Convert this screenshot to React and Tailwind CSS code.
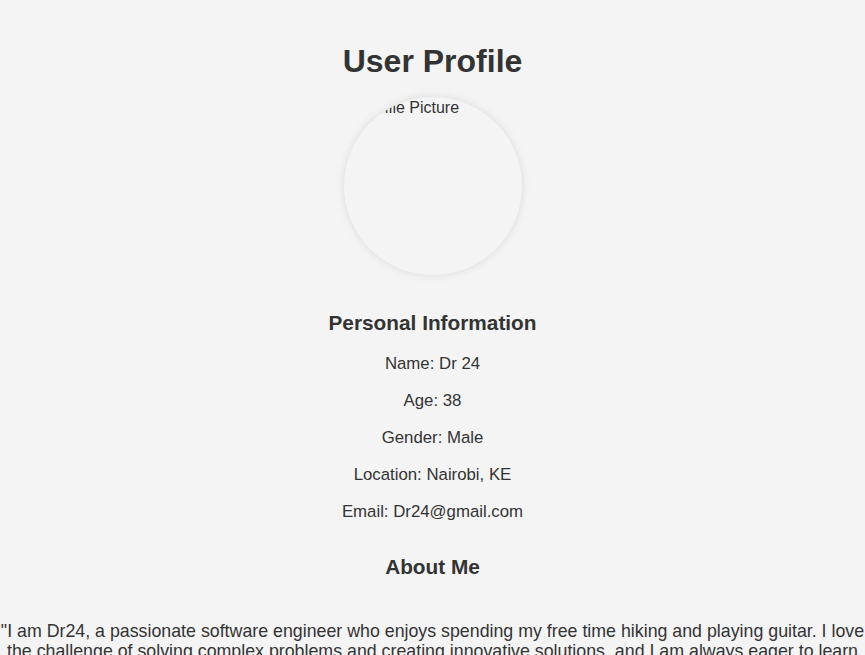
export default function App() {
  return (
    <div
      className="min-h-screen w-full bg-[#f4f4f4] text-[#333333] text-center overflow-hidden"
      style={{ fontFamily: '"Liberation Sans", Arial, Helvetica, sans-serif' }}
    >
      <div className="flex flex-col items-center pt-[43px]">
        <h1 className="text-[32px] leading-[37px] font-bold">User Profile</h1>

        <div className="mt-[17px] w-[178px] h-[178px] rounded-full overflow-hidden bg-[#f4f4f4] shadow-[0_0_10px_rgba(0,0,0,0.1)] text-left">
          <div className="pl-[16px] pt-[1px] text-[16px] leading-[19px] whitespace-nowrap">
            Profile Picture
          </div>
        </div>

        <h2 className="mt-[36px] text-[20.8px] leading-[24px] font-bold">Personal Information</h2>

        <div className="mt-[19px] flex flex-col items-center gap-[18px] text-[16.8px] leading-[19px]">
          <p>Name: Dr 24</p>
          <p>Age: 38</p>
          <p>Gender: Male</p>
          <p>Location: Nairobi, KE</p>
          <p>Email: Dr24@gmail.com</p>
        </div>

        <h2 className="mt-[34px] text-[20.8px] leading-[24px] font-bold">About Me</h2>

        <p className="mt-[42px] w-full text-[17.8px] leading-[20px]">
          "I am Dr24, a passionate software engineer who enjoys spending my free time hiking and playing guitar. I love
          the challenge of solving complex problems and creating innovative solutions, and I am always eager to learn
          new technologies and improve my skills."
        </p>
      </div>
    </div>
  );
}
